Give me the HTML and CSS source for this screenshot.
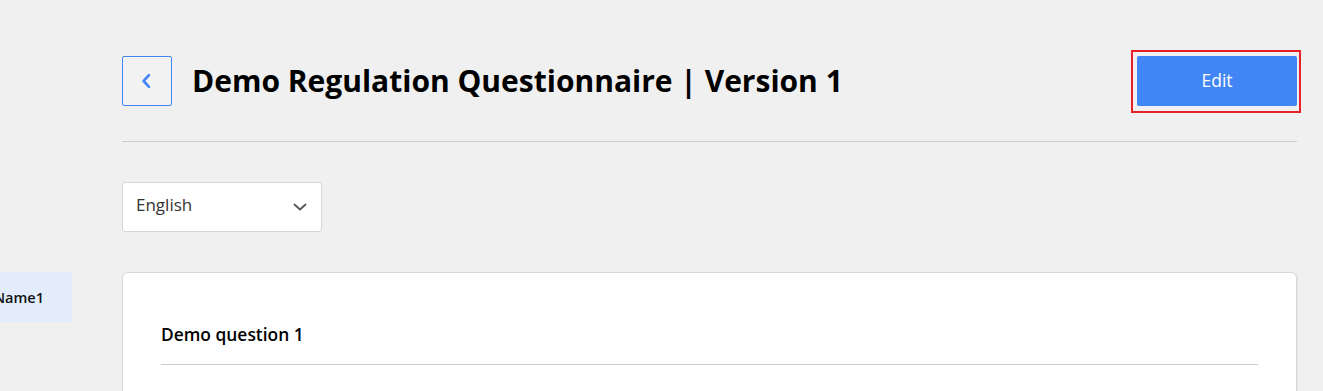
FILE: index.html
```html
<!DOCTYPE html>
<html lang="en">
<head>
<meta charset="utf-8">
<title>Demo Regulation Questionnaire</title>
<link rel="stylesheet" href="styles.css">
</head>
<body>
<div class="layout">
  <aside class="sidebar">
    <div class="side-item"><span class="side-label">Name1</span></div>
  </aside>
  <main class="main">
    <header class="header">
      <button class="back-btn" aria-label="Back">
        <svg width="16" height="16" viewBox="0 0 16 16"><path d="M10 2.2 L4.6 8 L10 13.8" fill="none" stroke="#4285f4" stroke-width="2.6" stroke-linecap="round" stroke-linejoin="round"/></svg>
      </button>
      <h1 class="title">Demo Regulation Questionnaire | Version 1</h1>
      <div class="edit-wrap">
        <button class="edit-btn">Edit</button>
      </div>
    </header>
    <hr class="divider">
    <div class="select">
      <span class="select-value">English</span>
      <svg class="chev" width="14" height="8" viewBox="0 0 14 8"><path d="M1.5 1.5 L7 6.5 L12.5 1.5" fill="none" stroke="#555" stroke-width="1.8" stroke-linecap="round" stroke-linejoin="round"/></svg>
    </div>
    <section class="card">
      <h2 class="question">Demo question 1</h2>
      <hr class="card-line">
    </section>
  </main>
</div>
</body>
</html>
```

FILE: styles.css
```css
* { box-sizing: border-box; }
html, body { margin: 0; padding: 0; }
body {
  background: #f0f0f0;
  font-family: "Open Sans", "Noto Sans", sans-serif;
  color: #000;
  height: 391px;
  overflow: hidden;
}
.layout {
  display: flex;
  align-items: flex-start;
}
.sidebar {
  width: 72px;
  flex: 0 0 72px;
  padding-top: 272px;
  overflow: hidden;
}
.side-item {
  height: 50px;
  background: #e2ecfa;
  display: flex;
  align-items: center;
  justify-content: flex-end;
  padding-right: 28px;
  overflow: hidden;
  white-space: nowrap;
}
.side-label {
  font-size: 14.5px;
  font-weight: 600;
  color: #111;
}
.main {
  margin-left: 50px;
  width: 1175px;
  padding-top: 56px;
}
.header {
  display: flex;
  align-items: center;
  height: 50px;
}
.back-btn {
  width: 50px;
  height: 50px;
  border: 1px solid #4285f4;
  border-radius: 2px;
  background: #f2f2f2;
  display: flex;
  align-items: center;
  justify-content: center;
  padding: 0;
  flex: 0 0 auto;
}
.title {
  margin: 0 0 0 20px;
  font-size: 30px;
  font-weight: 700;
  flex: 1;
  line-height: 1;
}
.edit-wrap {
  position: relative;
}
.edit-wrap::after {
  content: "";
  position: absolute;
  left: -6px;
  top: -6px;
  right: -4px;
  bottom: -7px;
  border: 2px solid #e8202a;
  pointer-events: none;
}
.edit-btn {
  width: 160px;
  height: 50px;
  background: #4285f4;
  color: #fff;
  border: none;
  border-radius: 2px;
  font-family: "Open Sans", "Noto Sans", sans-serif;
  font-size: 17.5px;
  font-weight: 400;
  display: block;
  padding: 0 0 2px 0;
}
.divider {
  margin: 35px 0 0 0;
  border: none;
  border-top: 1px solid #cccccc;
  height: 0;
}
.select {
  margin-top: 40px;
  width: 200px;
  height: 50px;
  background: #fff;
  border: 1px solid #d6d6d6;
  border-radius: 3px;
  display: flex;
  align-items: center;
  justify-content: space-between;
  padding: 0 14px 0 13px;
}
.select-value {
  font-size: 17px;
  color: #333;
  margin-bottom: 5px;
}
.card {
  margin-top: 40px;
  background: #fff;
  border: 1px solid #d8d8d8;
  border-radius: 6px;
  box-shadow: 1px 0 1px rgba(0,0,0,0.06);
  padding: 50px 38px 40px 38px;
  height: 200px;
}
.question {
  margin: 0;
  font-size: 17.4px;
  font-weight: 600;
  line-height: 22px;
}
.card-line {
  margin: 19px 0 0 0;
  border: none;
  border-top: 1px solid #cccccc;
  height: 0;
}
```
